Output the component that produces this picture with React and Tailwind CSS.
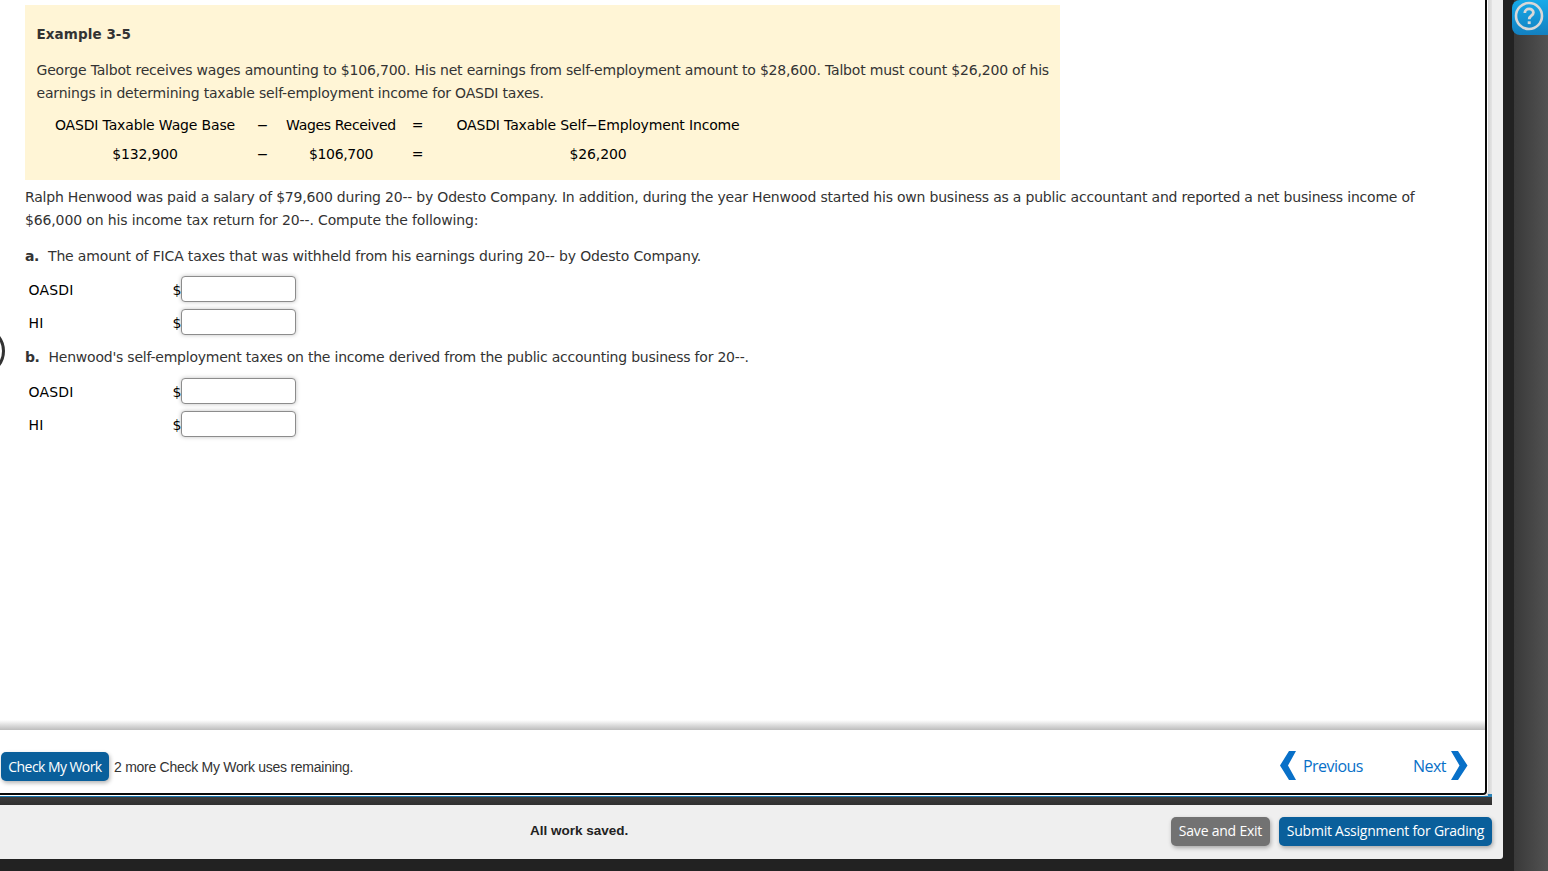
// App.jsx
import React from "react";

const wageRows = [
  {
    base: "OASDI Taxable Wage Base",
    wages: "Wages Received",
    income: "OASDI Taxable Self−Employment Income",
  },
  { base: "$132,900", wages: "$106,700", income: "$26,200" },
];

const AnswerRow = ({ label }) => (
  <div className="flex h-[33px] items-center pl-[3.5px] text-black">
    <label className="w-[144px] tracking-[0.2px]">{label}</label>
    <span className="w-[8.5px]">$</span>
    <input
      type="text"
      aria-label={label}
      className="mb-[3px] h-[26px] w-[115px] rounded-[4px] border border-[#8c8c8c] bg-white px-1 shadow-[0_0_4px_rgba(0,0,0,0.25)] outline-none"
    />
  </div>
);

const ExampleBox = () => (
  <section className="h-[175px] w-[1035px] bg-[#fff5d6] pt-[18px] pl-[11.5px]">
    <h3 className="text-[13.5px] leading-[23px] font-bold tracking-[0.08px]">
      Example 3-5
    </h3>
    <p className="mt-[13px] tracking-[-0.192px]">
      George Talbot receives wages amounting to $106,700. His net earnings from
      self-employment amount to $28,600. Talbot must count $26,200 of his
      <br />
      earnings in determining taxable self-employment income for OASDI taxes.
    </p>
    <div className="mt-[6px] w-fit tracking-[-0.16px] text-black">
      {wageRows.map((row) => (
        <div
          key={row.base}
          className="grid h-[29px] grid-cols-[217px_18px_139px_14px_347px] items-center text-center"
        >
          <span>{row.base}</span>
          <span>−</span>
          <span className="tracking-[-0.33px]">{row.wages}</span>
          <span>=</span>
          <span>{row.income}</span>
        </div>
      ))}
    </div>
  </section>
);

const Question = () => (
  <div className="h-[727px] pt-[5px] pl-[25px] font-['DejaVu_Sans',Verdana,sans-serif] text-[14px] leading-[23px] whitespace-nowrap text-[#333]">
    <ExampleBox />
    <p className="mt-[6px] tracking-[-0.205px]">
      Ralph Henwood was paid a salary of $79,600 during 20-- by Odesto Company.
      In addition, during the year Henwood started his own business as a public
      accountant and reported a net business income of
      <br />
      <span className="tracking-[-0.14px]">
        $66,000 on his income tax return for 20--. Compute the following:
      </span>
    </p>
    <p className="mt-[13px] flex">
      <b className="w-[23px] tracking-[-0.4px]">a.</b>
      <span className="tracking-[-0.16px]">
        The amount of FICA taxes that was withheld from his earnings during 20--
        by Odesto Company.
      </span>
    </p>
    <div className="mt-[6px]">
      <AnswerRow label="OASDI" />
      <AnswerRow label="HI" />
    </div>
    <p className="mt-[6px] flex">
      <b className="w-[23.5px] tracking-[-0.4px]">b.</b>
      <span className="tracking-[-0.222px]">
        Henwood's self-employment taxes on the income derived from the public
        accounting business for 20--.
      </span>
    </p>
    <div className="mt-[7px]">
      <AnswerRow label="OASDI" />
      <AnswerRow label="HI" />
    </div>
  </div>
);

const Toolbar = () => (
  <div className="flex h-[63px] items-center justify-between bg-white pt-2.5 pr-[17px] pl-px">
    <div className="flex items-center gap-[5px]">
      <button className="h-[29px] w-[108px] rounded-[5px] bg-[#0a5f9b] font-['Open_Sans'] text-[14px] tracking-[-0.56px] whitespace-nowrap text-white shadow-[1px_2px_4px_rgba(0,0,0,0.3)]">
        Check My Work
      </button>
      <span className="pt-0.5 font-['Liberation_Sans',Arial,sans-serif] text-[14px] tracking-[-0.265px] text-[#333]">
        2 more Check My Work uses remaining.
      </span>
    </div>
    <nav className="mb-[3px] flex items-center font-['Open_Sans'] text-[16px] tracking-[-0.55px] text-[#0870c8]">
      <svg width="17" height="29" viewBox="0 0 17 29" fill="currentColor">
        <path d="M9 0h7L8 14.5 16 29H9L0 14.5z" />
      </svg>
      <span className="ml-1.5 w-[110px] pt-0.5">Previous</span>
      <span className="w-[38px] pt-0.5">Next</span>
      <svg width="17" height="29" viewBox="0 0 17 29" fill="currentColor">
        <path d="M0 0h7l9.5 14.5L7 29H0l8.5-14.5z" />
      </svg>
    </nav>
  </div>
);

const Footer = () => (
  <footer className="flex h-[54px] items-center pr-[11px] pb-0.5 font-['Open_Sans'] text-[14px] text-white">
    <strong className="ml-[530px] flex-1 font-['Liberation_Sans',Arial,sans-serif] text-[13.5px] text-[#222]">
      All work saved.
    </strong>
    <button className="mr-[9px] h-[29px] w-[99px] rounded-[5px] bg-[#727272] pb-px tracking-[-0.22px] whitespace-nowrap shadow-[1px_2px_4px_rgba(0,0,0,0.3)]">
      Save and Exit
    </button>
    <button className="h-[29px] w-[213px] rounded-[5px] bg-[#0a5f9b] pb-px tracking-[-0.24px] whitespace-nowrap shadow-[1px_2px_4px_rgba(0,0,0,0.3)]">
      Submit Assignment for Grading
    </button>
  </footer>
);

const App = () => {
  return (
    <div className="flex h-[871px] w-[1548px] overflow-hidden bg-[#222]">
      <main className="relative h-[859px] w-[1503px] overflow-hidden rounded-br-[3px] bg-[#efefef]">
        <div className="h-[797px] w-[1492px] border-b border-[#1876ae] bg-[linear-gradient(to_right,#cfcfcf_1487px,#e4e4e4_1492px)]">
          <div className="h-[796px] w-[1488px] rounded-br-[5px] border-r border-b border-white bg-white">
            <div className="h-[795px] w-[1487px] overflow-hidden rounded-br-[4px] border-r-2 border-b-2 border-[#090909] bg-white">
              <Question />
              <div className="-mt-[7px] h-[10px] bg-linear-to-b from-white to-[#bdbdbd]"></div>
              <Toolbar />
            </div>
          </div>
        </div>
        <div className="h-2 w-[1492px] bg-linear-to-b from-[#3c3c3c] to-[#303030]"></div>
        <Footer />

        {/* edge of the round pager button that is scrolled off the left side */}
        <div className="absolute top-[326px] -left-[45px] size-[50px] rounded-full border-[3px] border-[#333]"></div>
        <div className="absolute top-[794px] left-[1488px] h-[3px] w-1 bg-[#2b83b8]"></div>
      </main>

      <div className="w-[11px] bg-[#222]"></div>
      <aside className="relative h-[871px] w-[34px] bg-linear-to-r from-[#393939] to-[#525252]">
        <button
          aria-label="Help"
          className="absolute top-0 -left-0.5 flex h-[35px] w-9 items-center justify-center rounded-l-[8px] bg-linear-to-b from-[#16aae9] to-[#1380c0] pr-0.5 pb-[3px]"
        >
          <svg width="30" height="30" viewBox="0 0 30 30" fill="none" stroke="#d8d8d8">
            <circle cx="15" cy="15" r="13" strokeWidth="2.6" />
            <path
              d="M10.8 12c0-5.4 8.6-5.2 8.6-.4 0 3.2-4.2 3-4.2 6.6"
              strokeWidth="2.8"
            />
            <path d="M15.2 20.3v2.8" strokeWidth="3" />
          </svg>
        </button>
      </aside>
    </div>
  );
};

export default App;
